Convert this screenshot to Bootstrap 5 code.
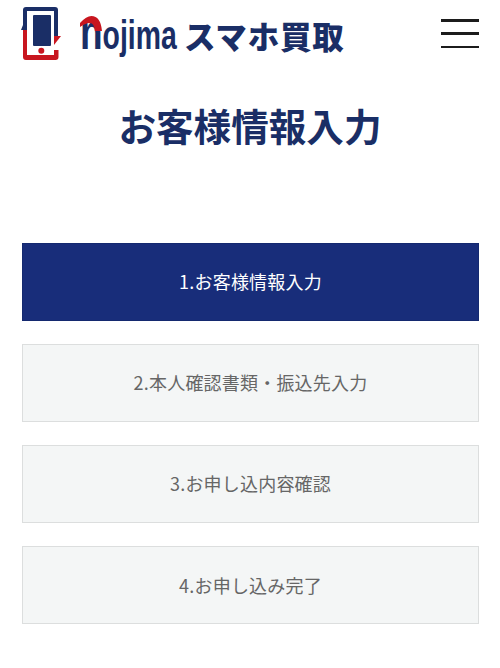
<!DOCTYPE html>
<html lang="ja">
<head>
<meta charset="utf-8">
<title>お客様情報入力</title>
<link href="https://cdn.jsdelivr.net/npm/bootstrap@5.3.0/dist/css/bootstrap.min.css" rel="stylesheet">
<style>
html,body{height:100%;}
body{font-family:"Noto Sans CJK JP","Noto Sans",sans-serif;background:#fff;overflow:hidden;}
.site-head{padding:7px 21px 0 21px;height:61px;}
.brand-mark{width:40px;height:54px;flex:none;}
.brand-word{margin-left:19px;height:54px;color:#1a2e66;font-weight:700;line-height:1;white-space:nowrap;}
.brand-latin{position:relative;display:inline-block;font-family:"Liberation Sans",sans-serif;font-size:40px;transform:scaleX(.71);transform-origin:left bottom;width:104px;height:46px;line-height:46px;margin-top:-6px;}
.brand-n{font-size:52px;line-height:46px;}
.brand-arc{position:absolute;left:0;top:8px;width:31px;height:15px;}
.brand-kana{font-size:31.5px;letter-spacing:.8px;font-weight:900;margin-top:3px;}
.menu-bars{width:38px;height:29px;flex-direction:column;justify-content:space-between;margin-top:12px;background:none;border:0;padding:0;}
.menu-bars span{display:block;height:2.500px;background:#1c1c1c;}
.page-title{margin:37px 0 0;font-size:37.6px;line-height:54px;font-weight:700;color:#1a2e66;text-align:center;}
.step-list{margin:91px 21px 0 22px;gap:23.6px;}
.step-item{height:77.5px;font-size:18px;letter-spacing:.2px;color:#666;background:#f4f6f6;border:1px solid #dcdede;}
.step-item.is-current{color:#fff;background:#182d7a;border-color:#14296f;}
</style>
</head>
<body>
<header class="site-head d-flex align-items-start">
  <svg class="brand-mark" viewBox="0 0 40 54" aria-hidden="true">
    <path d="M0 23 L2 18 V3 Q2 0 5 0 H34 Q37 0 37 3 V29 H33 V4 H6 V23 Z" fill="#1a2e66"/>
    <path d="M2 23 H6 V48 H33 V43 H37.500 V50 Q37.500 53 34.500 53 H5 Q2 53 2 50 Z" fill="#c8161f"/>
    <path d="M40 29 H33 V38 Z" fill="#c8161f"/>
    <rect x="12" y="8" width="18" height="31" rx="1" fill="#1a2e66"/>
    <circle cx="20.300" cy="43.700" r="3" fill="#c8161f"/>
  </svg>
  <div class="brand-word d-flex align-items-center flex-grow-1">
    <span class="brand-latin"><span class="brand-n">n</span>ojima<svg class="brand-arc" viewBox="0 0 31 15" aria-hidden="true"><path d="M0 7 Q9 0 16 0 Q29 0 31 15 H21 Q20 7 14 7 Q8 7 0 11 Z" fill="#c8161f"/></svg></span>
    <span class="brand-kana">スマホ買取</span>
  </div>
  <button class="menu-bars d-flex" type="button" aria-label="メニュー"><span></span><span></span><span></span></button>
</header>
<main>
  <h1 class="page-title">お客様情報入力</h1>
  <ol class="step-list list-unstyled d-flex flex-column">
    <li class="step-item is-current d-flex align-items-center justify-content-center">1.お客様情報入力</li>
    <li class="step-item d-flex align-items-center justify-content-center">2.本人確認書類・振込先入力</li>
    <li class="step-item d-flex align-items-center justify-content-center">3.お申し込内容確認</li>
    <li class="step-item d-flex align-items-center justify-content-center">4.お申し込み完了</li>
  </ol>
</main>
<script src="https://cdn.jsdelivr.net/npm/bootstrap@5.3.0/dist/js/bootstrap.bundle.min.js"></script>
</body>
</html>
